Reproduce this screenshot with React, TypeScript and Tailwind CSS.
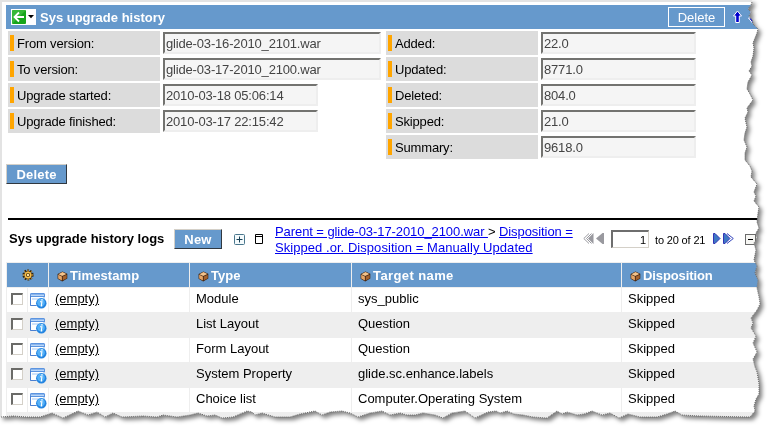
import React from 'react';

type Point = [number, number];

const RIGHT_EDGE: Point[] = [
  [752, 2], [751, 5], [748, 9], [751, 12], [749, 16], [752, 20], [753, 24], [758, 29], [757, 33], [755, 38],
  [753, 43], [754, 48], [753, 56], [751, 62], [752, 66], [749, 71], [752, 75], [748, 82], [747, 89], [750, 94],
  [753, 100], [750, 104], [747, 108], [748, 112], [745, 118], [746, 123], [747, 127], [745, 133], [744, 140],
  [747, 147], [745, 153], [745, 160], [750, 166], [752, 171], [751, 177], [757, 184], [754, 192], [756, 196],
  [754, 201], [759, 207], [758, 213], [757, 222], [759, 228], [756, 233], [757, 238], [754, 243], [756, 250],
  [754, 260], [757, 266], [755, 273], [758, 280], [757, 288], [759, 297], [760, 304], [757, 310], [751, 318],
  [753, 323], [751, 328], [756, 336], [753, 343], [757, 352], [753, 359], [755, 367], [757, 372], [758, 378],
  [759, 384], [759, 394], [756, 399], [754, 406], [755, 411], [750, 417],
];

const BOTTOM_EDGE: Point[] = [
  [700, 416], [682, 415], [675, 411], [667, 414], [657, 417], [640, 417], [628, 414], [619, 418], [610, 413],
  [602, 415], [592, 411], [584, 414], [577, 415], [567, 412], [562, 414], [557, 411], [547, 418], [533, 417],
  [523, 415], [514, 414], [507, 411], [500, 413], [496, 411], [488, 412], [475, 418], [465, 411], [452, 413],
  [443, 418], [435, 415], [423, 413], [415, 415], [407, 415], [400, 413], [390, 415], [382, 411], [370, 413],
  [358, 417], [350, 413], [342, 411], [330, 412], [322, 415], [315, 411], [300, 414], [290, 417], [275, 417],
  [262, 413], [255, 415], [252, 412], [247, 411], [233, 417], [222, 418], [215, 415], [207, 416], [198, 413],
  [190, 415], [177, 417], [163, 415], [157, 417], [143, 416], [122, 417], [113, 413], [105, 417], [97, 412],
  [88, 415], [78, 411], [63, 418], [52, 413], [40, 417], [27, 417], [13, 416], [1, 417],
];

const EDGE = [...RIGHT_EDGE, ...BOTTOM_EDGE];
const CLIP = `polygon(0px 0px, 752px 0px, ${EDGE.map(([x, y]) => `${x}px ${y}px`).join(', ')}, 0px 417px)`;

function Cube() {
  return (
    <svg width="11" height="11" viewBox="0 0 11 11" className="mt-[3px] shrink-0">
      <path d="M5.5 .5 10.3 2.8V7.6L5.2 10.4.6 7.8V3z" fill="#3d2210" />
      <path d="M5.5 1 9.4 3 5.2 5 1.4 3.2z" fill="#f3c38c" />
      <path d="M1.2 3.8 4.9 5.6V9.6L1.2 7.5z" fill="#e5a566" />
      <path d="M5.7 5.6 9.7 3.7V7.2L5.7 9.5z" fill="#a5622d" />
    </svg>
  );
}

function Gear() {
  return (
    <svg width="12" height="12" viewBox="0 0 12 12">
      <circle cx="6" cy="6" r="4.6" fill="none" stroke="#33240c" strokeWidth="2" strokeDasharray="1.8 1.1" />
      <circle cx="6" cy="6" r="4" fill="#5a3a10" />
      <circle cx="6" cy="6" r="2.7" fill="none" stroke="#f7c04a" strokeWidth="1.3" />
      <path d="M6 .8V3M6 9v2.2M.8 6H3M9 6h2.2M2.3 2.3 3.8 3.8M8.2 8.2 9.7 9.7M9.7 2.3 8.2 3.8M3.8 8.2 2.3 9.7" stroke="#dda33b" />
      <circle cx="6" cy="6" r="1.2" fill="#fbe3a0" />
    </svg>
  );
}

function RecordInfo() {
  return (
    <svg width="17" height="16" viewBox="0 0 17 16">
      <path d="M.5 1.5Q.5.5 1.5.5H14V9H8v3.5H.5z" fill="#fff" stroke="#8fb5e6" />
      <path d="M0 1.5Q0 0 1.5 0H13.5Q15 0 15 1.5V4H0z" fill="#5b94e0" />
      <path d="M1 2.3h13" stroke="#b9d6f8" strokeWidth="1.6" />
      <path d="M.5 3V12.5H6" stroke="#4a7fd0" fill="none" />
      <path d="M2 5.5H13M2 6.5h6" stroke="#cfe3fa" />
      <circle cx="11.3" cy="10.3" r="5.2" fill="#2384e0" />
      <circle cx="11" cy="9.6" r="3.8" fill="#55b1f7" />
      <path d="M10 8.8h1.9L11.3 13h1" stroke="#fff" strokeWidth="1.1" fill="none" />
      <path d="M11.2 6.3h1.5v1.3h-1.5z" fill="#fff" />
    </svg>
  );
}

function Field({ label, value, wide }: { label: string; value: string; wide?: boolean }) {
  return (
    <div className="flex h-6 items-start">
      <div className="flex h-6 w-[152px] items-center bg-[#dcdcdc]">
        <span className="ml-[2px] h-4 w-1 bg-[#ffa500]" />
        <span className="ml-[3px] pt-[2px] tracking-[-0.17px]">{label}</span>
      </div>
      <div
        className={`mt-px ml-[3px] flex h-[22px] items-center border-2 border-t-[#737370] border-r-[#eeeeee] border-b-[#eeeeee] border-l-[#737370] bg-[#f5f5f5] pt-px pl-px tracking-[-0.17px] text-[#444] ${wide ? 'w-[218px]' : 'w-[155px]'}`}
      >
        {value}
      </div>
    </div>
  );
}

function Button({ label, className }: { label: string; className: string }) {
  return (
    <button
      className={`flex h-5 items-center justify-center border border-t-[#d4d0c8] border-r-[#303840] border-b-[#303840] border-l-[#d4d0c8] bg-[#6699cc] pt-px font-bold tracking-[0.2px] text-white ${className}`}
    >
      {label}
    </button>
  );
}

const COLS = 'grid grid-cols-[42px_141px_162px_270px_160px]';

const ROWS = [
  ['Module', 'sys_public'],
  ['List Layout', 'Question'],
  ['Form Layout', 'Question'],
  ['System Property', 'glide.sc.enhance.labels'],
  ['Choice list', 'Computer.Operating System'],
  ['', ''],
];

const HEADS = [
  ['Timestamp', 'tracking-[0.1px]'],
  ['Type', ''],
  ['Target name', 'tracking-[0.4px]'],
  ['Disposition', 'tracking-[-0.1px]'],
];

export default function App() {
  return (
    <div className="relative h-[428px] w-[773px] overflow-hidden bg-white font-['Liberation_Sans',Arial,sans-serif] text-[13px] leading-4 text-black">
      <div className="[filter:drop-shadow(3px_3px_2px_rgba(0,0,0,0.5))]">
        <div className="h-[428px] w-[773px] overflow-hidden border-t-2 border-l-2 border-[#e3e3e3] bg-white pt-[3px] pl-1" style={{ clipPath: CLIP }}>
          <header className="flex h-6 w-[767px] items-center bg-[#6699cc]">
            <div className="ml-[5px] flex h-4 w-[25px] items-center bg-white pl-px">
              <svg width="24" height="14" viewBox="0 0 24 14">
                <rect width="14" height="14" rx="1" fill="#16a51b" />
                <path d="M0 0h14L0 14z" fill="#4cc44c" opacity=".6" />
                <path d="M2.5 7H12M7 2.5 2.5 7 7 11.5" stroke="#fff" strokeWidth="1.8" fill="none" />
                <path d="M16 5h6L19 8.3z" fill="#000" />
              </svg>
            </div>
            <h1 className="ml-[4px] pt-px font-bold text-white">Sys upgrade history</h1>
            <button className="ml-auto flex h-5 w-[57px] items-center justify-center border border-white pt-px text-white">Delete</button>
            <svg width="35" height="14" viewBox="0 0 35 14" className="mr-[5px] ml-2">
              <path d="M4.5 1 8.5 6H6.3V12.5H2.7V6H.5z" fill="#0000cd" stroke="#fff" />
              <path d="M19.5 13 15.5 8h2.2V1.5h3.6V8h2.2z" fill="#0000cd" stroke="#fff" />
            </svg>
          </header>

          <section className="mt-[2px] flex items-start gap-[5px] pl-[2px]">
            <div className="flex w-[373px] flex-col gap-[2px]">
              <Field label="From version:" value="glide-03-16-2010_2101.war" wide />
              <Field label="To version:" value="glide-03-17-2010_2100.war" wide />
              <Field label="Upgrade started:" value="2010-03-18 05:06:14" />
              <Field label="Upgrade finished:" value="2010-03-17 22:15:42" />
            </div>
            <div className="flex flex-col gap-[2px]">
              <Field label="Added:" value="22.0" />
              <Field label="Updated:" value="8771.0" />
              <Field label="Deleted:" value="804.0" />
              <Field label="Skipped:" value="21.0" />
              <Field label="Summary:" value="9618.0" />
            </div>
          </section>

          <Button label="Delete" className="mt-[5px] w-[61px]" />
          <div className="mt-[34px] ml-[2px] h-[2px] bg-black" />

          <div className="flex h-[42px] w-[767px] items-start">
            <h2 className="mt-[11px] ml-[3px] w-[165px] font-bold whitespace-nowrap">Sys upgrade history logs</h2>
            <Button label="New" className="mt-[9px] w-12" />
            <svg width="12" height="12" viewBox="0 0 12 12" className="mt-[14px] ml-3">
              <rect x=".5" y=".5" width="10" height="10" rx="1" fill="#f4fafc" stroke="#49768c" />
              <path d="M5.5 2.5v6M2.5 5.5h6" stroke="#173f55" />
            </svg>
            <svg width="9" height="11" viewBox="0 0 9 11" className="mt-[14px] ml-[9px]">
              <path d="M.5.5h7v9h-7zM0 2.5h8" fill="none" stroke="#000" />
            </svg>
            <div className="mt-[4px] ml-[11px] w-[308px] whitespace-nowrap">
              <div className="tracking-[-0.08px]">
                <a className="text-[#0000ee] underline">Parent = glide-03-17-2010_2100.war&nbsp;</a>&gt;{' '}
                <a className="text-[#0000ee] underline">Disposition =</a>
              </div>
              <a className="tracking-[0.05px] text-[#0000ee] underline">Skipped .or. Disposition = Manually Updated</a>
            </div>
            <svg width="22" height="12" viewBox="0 0 22 12" className="mt-[13px]">
              <path d="M6 .5.8 5.5 6 10.5M8.5.5 3.5 5.5 8.5 10.5" fill="none" stroke="#99999f" />
              <path d="M10.5 0 5 5.5 10.5 11zM21 0h-1.5L13 5.5 19.5 11H21z" fill="#99999f" />
            </svg>
            <div className="mt-[10px] ml-[6px] flex h-[18px] w-[38px] items-center justify-end border border-t-2 border-l-2 border-t-[#6e6e6e] border-r-[#d4d0c8] border-b-[#d4d0c8] border-l-[#6e6e6e] pr-[2px] text-[11px]">1</div>
            <span className="mt-[12px] ml-[6px] w-[58px] text-[11px] tracking-[-0.15px] whitespace-nowrap">to 20 of 21</span>
            <svg width="22" height="12" viewBox="0 0 22 12" className="mt-[13px]">
              <path d="M.5.5H2L7 5.5 2 10.5H.5zM10.5.5H12L17 5.5 12 10.5H10.5z" fill="#3d78c4" stroke="#3333b5" />
              <path d="M14 .5 20.3 5.5 14 10.5" fill="none" stroke="#3344bb" />
            </svg>
            <svg width="11" height="11" viewBox="0 0 11 11" className="mt-[14px] ml-[10px]">
              <rect x=".5" y=".5" width="10" height="10" fill="#f7f7f4" stroke="#6b6b6b" />
              <path d="M3 5.5h5" stroke="#000" />
            </svg>
          </div>

          <div className="w-[775px] border-t border-l border-[#eeeeee]">
            <div className={`${COLS} h-[25px] border-b border-[#eeeeee] bg-[#6699cc] text-white`}>
              <div className="flex items-center justify-center border-r border-[#eeeeee]"><Gear /></div>
              {HEADS.map(([name, tracking]) => (
                <div key={name} className="flex items-center gap-[2px] border-r border-[#eeeeee] pl-[8px]">
                  <Cube />
                  <span className={`pt-px font-bold ${tracking}`}>{name}</span>
                </div>
              ))}
            </div>
            {ROWS.map(([type, target], i) => (
              <div key={i} className={`${COLS} h-[25px] border-b border-[#eeeeee] ${i % 2 ? 'bg-[#eeeeee]' : 'bg-white'}`}>
                <div className="flex border-r border-[#eeeeee]">
                  <div className="w-[21px] border-r border-[#eeeeee] pt-[5px] pl-1">
                    {type && <div className="h-3 w-3 border border-t-2 border-l-2 border-t-[#6b6b68] border-r-[#d4d0c8] border-b-[#d4d0c8] border-l-[#6b6b68] bg-white" />}
                  </div>
                  <div className="pt-[5px] pl-[2px]">{type && <RecordInfo />}</div>
                </div>
                <div className="border-r border-[#eeeeee] pt-[3px] pl-[6px]">{type && <a className="underline">(empty)</a>}</div>
                <div className="border-r border-[#eeeeee] pt-[3px] pl-[6px]">{type}</div>
                <div className="border-r border-[#eeeeee] pt-[3px] pl-[6px]">{target}</div>
                <div className="pt-[3px] pl-[6px]">{type && 'Skipped'}</div>
              </div>
            ))}
          </div>
        </div>
      </div>
      <svg width="773" height="428" className="pointer-events-none absolute top-0 left-0">
        <polyline points={EDGE.map((p) => p.join(',')).join(' ')} fill="none" stroke="#666" strokeWidth="1" strokeDasharray="1 1" />
      </svg>
    </div>
  );
}
